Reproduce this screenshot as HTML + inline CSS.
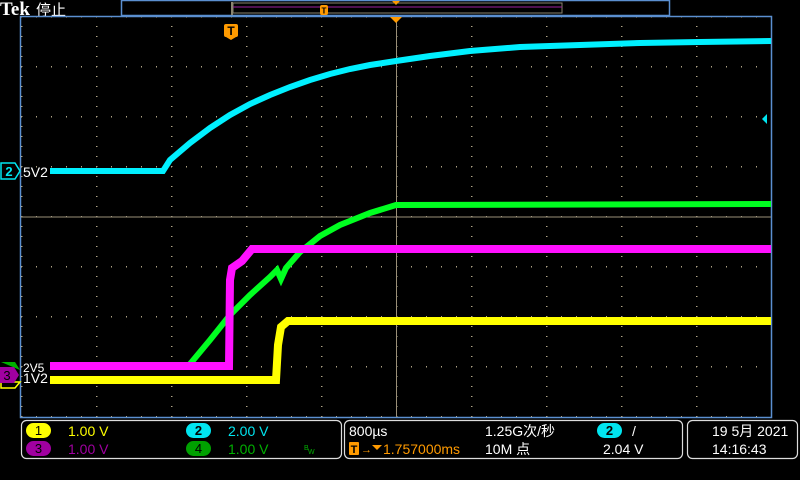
<!DOCTYPE html>
<html><head><meta charset="utf-8"><style>
body{margin:0;background:#000;width:800px;height:480px;overflow:hidden;font-family:"Liberation Sans","Noto Sans CJK SC",sans-serif;}
</style></head><body>
<svg width="800" height="480" xmlns="http://www.w3.org/2000/svg" style="position:absolute;left:0;top:0">
<defs>
<pattern id="dh" x="0" y="0" width="15" height="50" patternUnits="userSpaceOnUse"><rect x="6" y="16" width="1" height="1.5" fill="#b0a588"/></pattern>
<pattern id="dv" x="0" y="0" width="75" height="10" patternUnits="userSpaceOnUse"><rect x="21" y="6" width="1.5" height="1" fill="#b0a588"/></pattern>
</defs>
<rect x="0" y="0" width="800" height="480" fill="#000"/>
<text x="0" y="15" fill="#fff" font-family="Liberation Serif,serif" font-weight="bold" font-size="19">Tek</text>
<text x="36" y="15" fill="#fff" font-size="15" font-family="Noto Sans CJK SC,sans-serif">停止</text>
<rect x="121.5" y="0.5" width="548" height="15" fill="none" stroke="#5b8fd0" stroke-width="1.5"/>
<rect x="231" y="2" width="2" height="13" fill="#8a8470"/>
<rect x="233" y="3" width="329" height="10" fill="none" stroke="#8a8470"/>
<line x1="233" y1="7" x2="562" y2="7" stroke="#a020a0"/>
<rect x="320" y="5" width="8" height="10" rx="2" fill="#ff9a00"/><text x="324" y="13.5" font-size="8" fill="#000" text-anchor="middle" font-weight="bold">T</text>
<polygon points="392,1 400,1 396,5" fill="#ff9a00"/>
<rect x="20.5" y="16.5" width="751" height="401" fill="none" stroke="#5b8fd0" stroke-width="1.5"/>
<rect x="21" y="17" width="750" height="400" fill="url(#dh)"/>
<rect x="21" y="17" width="750" height="400" fill="url(#dv)"/>
<line x1="21" y1="217" x2="771" y2="217" stroke="#9a8f78"/>
<line x1="396.5" y1="17" x2="396.5" y2="417" stroke="#9a8f78"/>
<polygon points="390,17 402,17 396,23" fill="#ff9a00"/>
<rect x="224" y="24" width="14" height="13" rx="2" fill="#ff9a00"/><polygon points="226,37 236,37 231,40" fill="#ff9a00"/>
<text x="231" y="35" font-size="12" fill="#000" text-anchor="middle" font-weight="bold">T</text>
<polygon points="762,119 767,114 767,124" fill="#00e5f0"/>
<polyline fill="none" stroke="#00f0ff" stroke-width="6" points="50,171 163,171 170,160 190,143 210,128 230,115 250,104 270,95 290,87 310,80 330,74 350,69 370,65 396,61 430,56 470,51 520,47 580,45 640,43 700,42 771,41"/>
<polyline fill="none" stroke="#00ff20" stroke-width="6" points="190,364 210,340 230,315 250,295 270,277 277,270 281,279 286,268 300,252 320,236 340,225 370,213 396,205 771,204"/>
<polyline fill="none" stroke="#ff10ff" stroke-width="8" points="50,366 229,366 230,280 232,268 242,261 252,249 771,249"/>
<polyline fill="none" stroke="#ffff00" stroke-width="8" points="50,380 276,380 278,345 281,327 288,321 771,321"/>
<path d="M1,163 h14 l5,8 l-5,8 h-14 z" fill="#000" stroke="#00e5f0" stroke-width="1.5"/>
<text x="9" y="176" font-size="13" fill="#00e5f0" text-anchor="middle" font-weight="bold">2</text>
<text x="23" y="177" font-size="14" fill="#fff">5V2</text>
<text x="23" y="372" font-size="12" fill="#fff">2V5</text>
<text x="23" y="383" font-size="14" fill="#fff">1V2</text>
<path d="M1,362 h14 l5,8 z" fill="#00b000"/>
<path d="M1,388 h14 l5,-6 h-19 z" fill="none" stroke="#ffff00" stroke-width="1.5"/>
<path d="M0,367 h14 l5,8 l-5,8 h-14 z" fill="#a000a0"/>
<text x="7" y="380" font-size="13" fill="#000" text-anchor="middle">3</text>
<rect x="21.5" y="420.5" width="320" height="38" rx="5" fill="none" stroke="#ddd" stroke-width="1.2"/>
<rect x="344.5" y="420.5" width="338" height="38" rx="5" fill="none" stroke="#ddd" stroke-width="1.2"/>
<rect x="687.5" y="420.5" width="110" height="38" rx="5" fill="none" stroke="#ddd" stroke-width="1.2"/>
<rect x="26" y="423" width="25" height="15" rx="7.5" fill="#ffff00"/><text x="38.5" y="435" font-size="13" fill="#000" text-anchor="middle">1</text>
<text x="68" y="436" font-size="14" fill="#ffff00">1.00 V</text>
<rect x="26" y="441" width="25" height="15" rx="7.5" fill="#a000a0"/><text x="38.5" y="453" font-size="13" fill="#000" text-anchor="middle">3</text>
<text x="68" y="454" font-size="14" fill="#a000a0">1.00 V</text>
<rect x="186" y="423" width="25" height="15" rx="7.5" fill="#00e5f0"/><text x="198.5" y="435" font-size="13" fill="#000" text-anchor="middle" font-weight="bold">2</text>
<text x="228" y="436" font-size="14" fill="#00e5f0">2.00 V</text>
<rect x="186" y="441" width="25" height="15" rx="7.5" fill="#00a000"/><text x="198.5" y="453" font-size="13" fill="#000" text-anchor="middle">4</text>
<text x="228" y="454" font-size="14" fill="#00b000">1.00 V</text>
<text x="304" y="450" font-size="7" fill="#00b000">B</text><text x="308" y="454" font-size="7" fill="#00b000">W</text>
<text x="349" y="436" font-size="14" fill="#fff">800µs</text>
<rect x="349" y="442" width="10" height="13" rx="1" fill="#ff9a00"/><text x="354" y="453" font-size="11" fill="#000" text-anchor="middle" font-weight="bold">T</text>
<text x="361" y="453" font-size="11" fill="#ff9a00">→</text><polygon points="372,445 382,445 377,450" fill="#ff9a00"/>
<text x="383" y="454" font-size="14" fill="#ff9a00">1.757000ms</text>
<text x="485" y="436" font-size="14" fill="#fff">1.25G次/秒</text>
<text x="485" y="454" font-size="14" fill="#fff">10M 点</text>
<rect x="597" y="423" width="25" height="15" rx="7.5" fill="#00e5f0"/><text x="609.5" y="435" font-size="13" fill="#000" text-anchor="middle" font-weight="bold">2</text>
<text x="632" y="436" font-size="14" fill="#fff">/</text>
<text x="603" y="454" font-size="14" fill="#fff">2.04 V</text>
<text x="712" y="436" font-size="14" fill="#fff">19 5月 2021</text>
<text x="712" y="454" font-size="14" fill="#fff">14:16:43</text>
</svg>
</body></html>
